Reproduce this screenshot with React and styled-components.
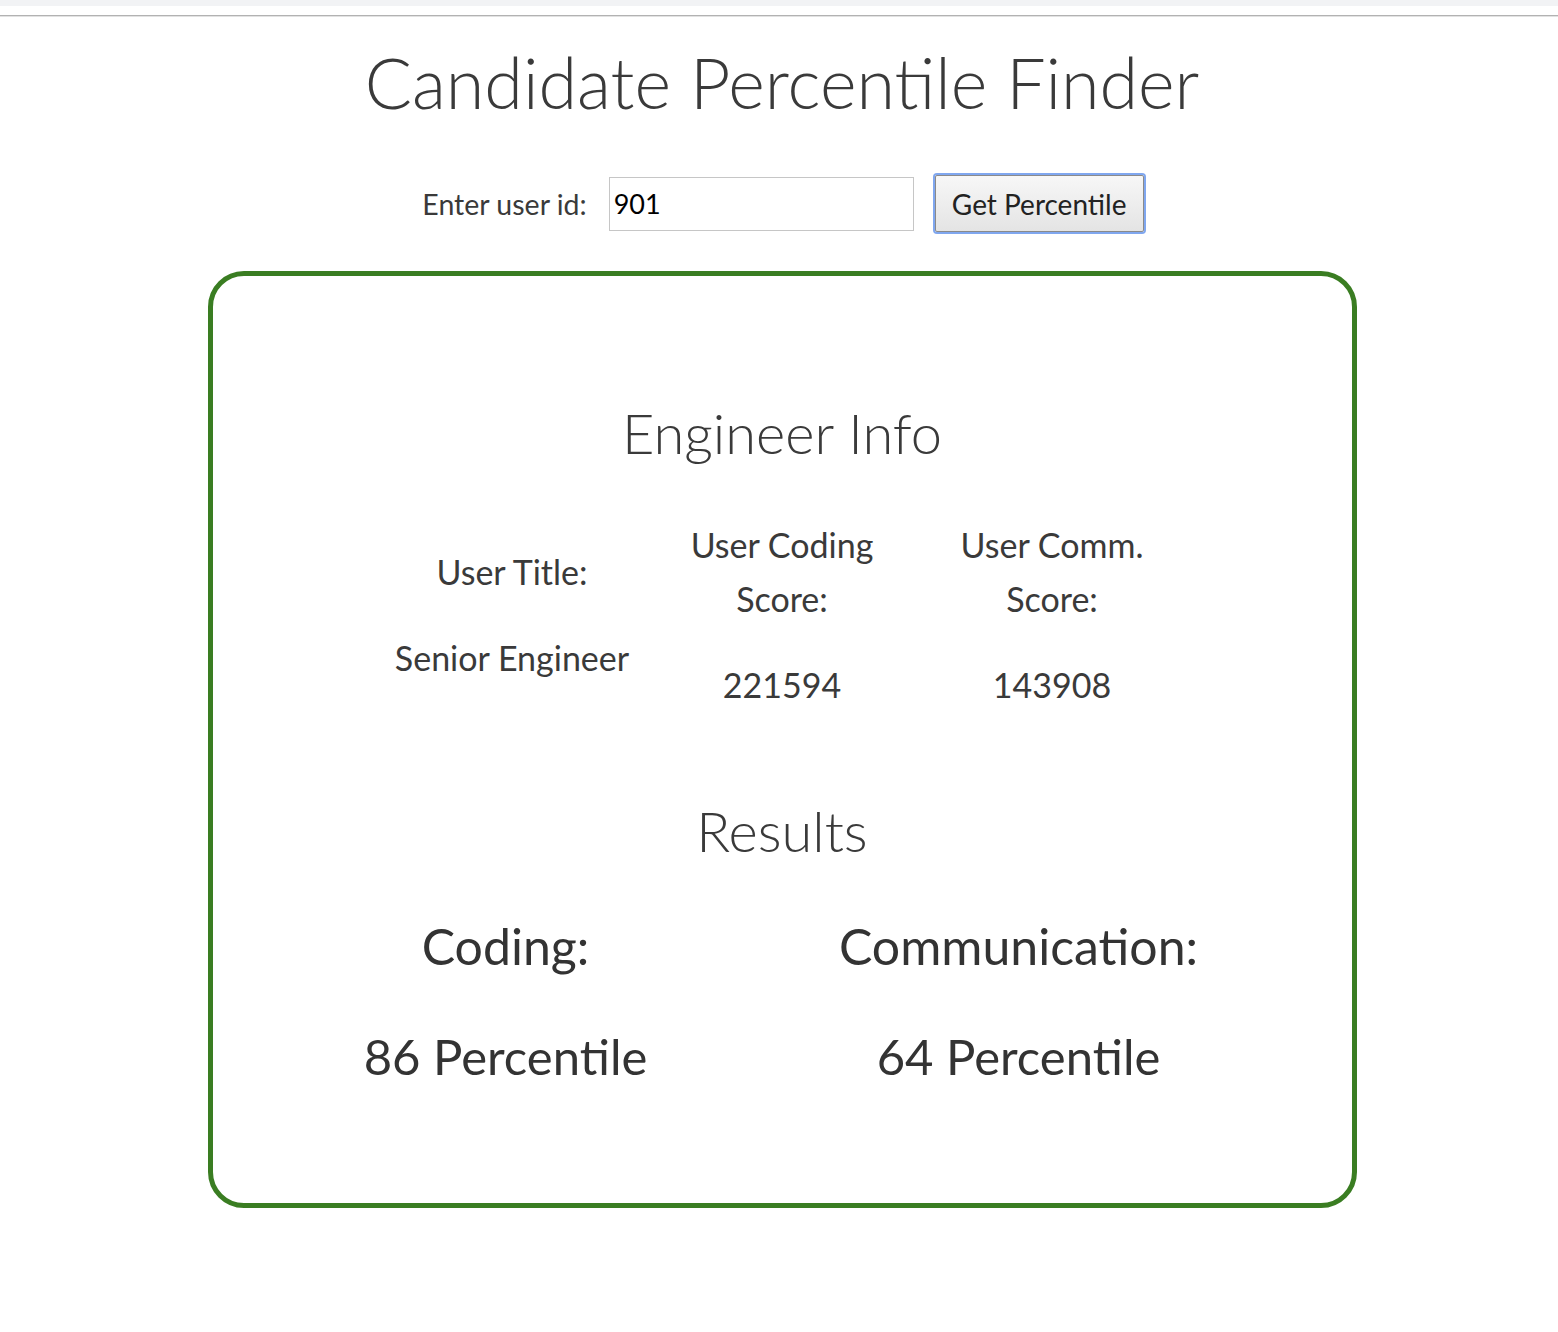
import React, { useState } from "react";
import styled, { createGlobalStyle } from "styled-components";

const GlobalStyle = createGlobalStyle`
  html, body {
    margin: 0;
    padding: 0;
    background: #ffffff;
  }
  body {
    font-family: "Lato", "Open Sans", sans-serif;
    color: #383838;
  }
`;

const engineer = {
  title: "Senior Engineer",
  codingScore: 221594,
  commScore: 143908,
};

const results = [
  { label: "Coding:", value: 86 },
  { label: "Communication:", value: 64 },
];

export default function App() {
  const [userId, setUserId] = useState("901");

  return (
    <>
      <GlobalStyle />
      <TopStrip />
      <Rule />
      <Page>
        <Title>Candidate Percentile Finder</Title>
        <LookupForm onSubmit={(e) => e.preventDefault()}>
          <Label htmlFor="uid">Enter user id:</Label>
          <IdInput
            id="uid"
            value={userId}
            onChange={(e) => setUserId(e.target.value)}
          />
          <SubmitButton type="submit">Get Percentile</SubmitButton>
        </LookupForm>
        <Card>
          <Heading>Engineer Info</Heading>
          <InfoRow>
            <InfoCol>
              <InfoText>User Title:</InfoText>
              <InfoText>{engineer.title}</InfoText>
            </InfoCol>
            <InfoCol>
              <InfoText>
                User Coding
                <br />
                Score:
              </InfoText>
              <InfoText>{engineer.codingScore}</InfoText>
            </InfoCol>
            <InfoCol>
              <InfoText>
                User Comm.
                <br />
                Score:
              </InfoText>
              <InfoText>{engineer.commScore}</InfoText>
            </InfoCol>
          </InfoRow>
          <Heading $results>Results</Heading>
          <ResultRow>
            {results.map((r) => (
              <ResultCol key={r.label}>
                <ResultLabel>{r.label}</ResultLabel>
                <ResultValue>{r.value} Percentile</ResultValue>
              </ResultCol>
            ))}
          </ResultRow>
        </Card>
      </Page>
    </>
  );
}

const TopStrip = styled.div`
  height: 6px;
  background: #f2f3f5;
`;

const Rule = styled.div`
  margin-top: 9px;
  height: 1px;
  background: #b2b2b2;
  border-bottom: 1px solid #e2e2e2;
`;

const Page = styled.div`
  display: flex;
  flex-direction: column;
  align-items: center;
`;

const Title = styled.h1`
  margin: 23px 0 0 0;
  font-size: 70px;
  font-weight: 300;
  line-height: 84px;
  color: #3a3a3a;
  padding-left: 6px;
`;

const LookupForm = styled.form`
  margin-top: 51px;
  display: flex;
  align-items: center;
  padding-left: 8px;
`;

const Label = styled.label`
  font-size: 28.5px;
  color: #3a3a3a;
  margin-right: 22px;
`;

const IdInput = styled.input`
  width: 305px;
  height: 54px;
  box-sizing: border-box;
  border: 1px solid #c6c6c6;
  padding: 0 4px;
  font-family: "Lato", "Open Sans", sans-serif;
  font-size: 27px;
  color: #000;
  outline: none;
`;

const SubmitButton = styled.button`
  margin-left: 21px;
  height: 57px;
  width: 209px;
  box-sizing: border-box;
  border: 1px solid #8a8a8a;
  border-radius: 2px;
  box-shadow: 0 0 0 2px #80a7ef;
  background: linear-gradient(#f7f7f7, #e4e4e4);
  font-family: "Lato", "Open Sans", sans-serif;
  font-size: 28px;
  color: #222;
  cursor: pointer;
  padding: 0;
`;

const Card = styled.div`
  margin-top: 39px;
  width: 1149px;
  box-sizing: border-box;
  border: 5px solid #3a7d22;
  border-radius: 36px;
  padding: 122px 0 118px 0;
  display: flex;
  flex-direction: column;
  align-items: center;
  margin-left: 6px;
`;

const Heading = styled.h2`
  margin: ${(p) => (p.$results ? "84px" : "0")} 0 0 0;
  font-size: 56px;
  font-weight: 300;
  line-height: 70px;
  color: #3a3a3a;
`;

const InfoRow = styled.div`
  margin-top: 50px;
  display: grid;
  grid-template-columns: repeat(3, 270px);
  align-items: center;
`;

const InfoCol = styled.div`
  display: flex;
  flex-direction: column;
  align-items: center;
  text-align: center;
  gap: 32px;
`;

const InfoText = styled.p`
  margin: 0;
  font-size: 34px;
  line-height: 54px;
  color: #3a3a3a;
`;

const ResultRow = styled.div`
  margin-top: 51px;
  display: grid;
  grid-template-columns: repeat(2, 513px);
  padding-right: 40px;
`;

const ResultCol = styled.div`
  display: flex;
  flex-direction: column;
  align-items: center;
  gap: 52px;
`;

const ResultLabel = styled.div`
  font-size: 50px;
  line-height: 58px;
  color: #333;
`;

const ResultValue = styled.div`
  font-size: 49px;
  line-height: 58px;
  color: #333;
`;
